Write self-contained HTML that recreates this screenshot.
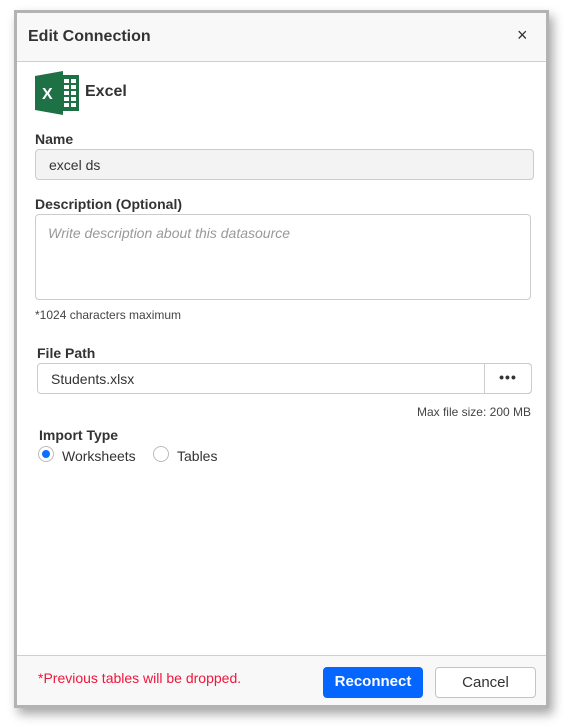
<!DOCTYPE html>
<html><head><style>
body{margin:0;width:569px;height:728px;background:#fff;font-family:"Liberation Sans",sans-serif;position:relative;overflow:hidden}
.dlg{position:absolute;left:14px;top:10px;width:529px;height:692px;border:3px solid #b3b3b3;background:#fff;box-shadow:4px 6px 10px rgba(0,0,0,.35)}
.hd{position:absolute;left:0;top:0;right:0;height:48px;background:#f8f8f8;border-bottom:1px solid #cfcfcf}
.ab{position:absolute;white-space:nowrap}
.lbl{font-size:14px;font-weight:bold;color:#333}
.inp{position:absolute;border:1px solid #ccc;border-radius:4px;box-sizing:border-box;font-size:14px;color:#333}
.ft{position:absolute;left:0;right:0;bottom:0;height:49px;background:#f8f8f8;border-top:1px solid #cfcfcf}
.btn{position:absolute;border-radius:4px;box-sizing:border-box;font-size:15px;font-weight:bold;text-align:center;line-height:30px}
</style></head><body>
<div class="dlg">
 <div class="hd">
  <div class="ab" style="left:11px;top:15px;font-size:16px;font-weight:bold;color:#333">Edit Connection</div>
  <div class="ab" style="left:500px;top:12px;font-size:18px;color:#333">×</div>
 </div>
 <svg class="ab" style="left:18px;top:58px" width="46" height="44" viewBox="0 0 46 44">
  <path d="M0 5 L28 0 L28 44 L0 39 Z" fill="#1e7145"/>
  <rect x="26" y="4" width="18" height="36" fill="#1e7145"/>
  <g fill="#fff"><rect x="29" y="8" width="5" height="4"/><rect x="36" y="8" width="5" height="4"/><rect x="29" y="14" width="5" height="4"/><rect x="36" y="14" width="5" height="4"/><rect x="29" y="20" width="5" height="4"/><rect x="36" y="20" width="5" height="4"/><rect x="29" y="26" width="5" height="4"/><rect x="36" y="26" width="5" height="4"/><rect x="29" y="32" width="5" height="4"/><rect x="36" y="32" width="5" height="4"/></g>
  <text x="7" y="28" fill="#fff" font-size="16" font-weight="bold" font-family="Liberation Sans">X</text>
 </svg>
 <div class="ab" style="left:68px;top:70px;font-size:16px;font-weight:bold;color:#333">Excel</div>
 <div class="ab lbl" style="left:18px;top:118px">Name</div>
 <div class="inp" style="left:18px;top:136px;width:499px;height:31px;background:#f3f3f3;padding:7px 13px">excel ds</div>
 <div class="ab lbl" style="left:18px;top:183px">Description (Optional)</div>
 <div class="inp" style="left:18px;top:201px;width:496px;height:86px;padding:10px 12px;color:#999;font-style:italic">Write description about this datasource</div>
 <div class="ab" style="left:18px;top:295px;font-size:12px;color:#444">*1024 characters maximum</div>
 <div class="ab lbl" style="left:20px;top:332px">File Path</div>
 <div class="inp" style="left:20px;top:350px;width:495px;height:31px;padding:7px 13px">Students.xlsx</div>
 <div class="inp" style="left:467px;top:350px;width:48px;height:31px;border-radius:0 4px 4px 0;text-align:center;font-weight:bold;line-height:26px;letter-spacing:1px">•••</div>
 <div class="ab" style="right:15px;top:392px;font-size:12px;color:#444">Max file size: 200 MB</div>
 <div class="ab lbl" style="left:22px;top:414px">Import Type</div>
 <div class="ab" style="left:21px;top:433px;width:16px;height:16px;border:1px solid #bbb;border-radius:50%;box-sizing:border-box"><div style="margin:3px;width:8px;height:8px;border-radius:50%;background:#0d6efd"></div></div>
 <div class="ab" style="left:45px;top:435px;font-size:14px;color:#333">Worksheets</div>
 <div class="ab" style="left:136px;top:433px;width:16px;height:16px;border:1px solid #bbb;border-radius:50%;box-sizing:border-box"></div>
 <div class="ab" style="left:160px;top:435px;font-size:14px;color:#333">Tables</div>
 <div class="ft">
  <div class="ab" style="left:21px;top:14px;font-size:14px;color:#f0163c">*Previous tables will be dropped.</div>
  <div class="btn" style="left:306px;top:11px;width:100px;height:31px;background:#0565ff;color:#fff">Reconnect</div>
  <div class="btn" style="left:418px;top:11px;width:101px;height:31px;background:#fff;border:1px solid #c4c4c4;color:#333;font-weight:normal;line-height:29px">Cancel</div>
 </div>
</div>
</body></html>
